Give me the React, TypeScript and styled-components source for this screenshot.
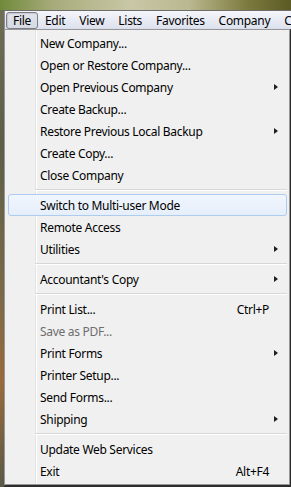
import styled, { createGlobalStyle } from "styled-components";

const GlobalStyle = createGlobalStyle`
  html, body {
    margin: 0;
    padding: 0;
    background: #4a4a3a;
  }
  * {
    box-sizing: border-box;
  }
`;

const Screen = styled.div`
  width: 291px;
  height: 487px;
  overflow: hidden;
  font-family: "Noto Sans", "Open Sans", sans-serif;
  font-size: 12px;
  letter-spacing: -0.3px;
  color: #000;
  background: linear-gradient(
    180deg,
    #6e6f55 0%,
    #5e5e48 30%,
    #7a6a4a 60%,
    #9a6a3a 78%,
    #5a5a4a 100%
  );
`;

const TitleStrip = styled.div`
  height: 10px;
  background: linear-gradient(
    90deg,
    #6f8a3a 0%,
    #a7ab7a 18%,
    #c9c7a6 45%,
    #b9b88f 65%,
    #7d7a3e 85%,
    #5c5a25 100%
  );
`;

const Window = styled.div`
  margin-left: 4px;
  border-top: 1px solid #6d6d6d;
  background: #3c3c3c;
  height: 477px;
`;

const MenuBar = styled.div`
  display: flex;
  align-items: center;
  height: 18px;
  padding-left: 1px;
  border-left: 1px solid #8c8c8c;
  background: linear-gradient(180deg, #f5f6fb 0%, #e6e9f3 60%, #dde2ee 100%);
  white-space: nowrap;
`;

const BarItem = styled.div<{ $open?: boolean }>`
  height: 17px;
  line-height: 15px;
  padding: 0 6px;
  border: 1px solid ${(p) => (p.$open ? "#7c7e86" : "transparent")};
  border-radius: 3px;
  background: ${(p) =>
    p.$open ? "linear-gradient(180deg, #e1e4ec 0%, #d6dae4 100%)" : "transparent"};
  box-shadow: ${(p) => (p.$open ? "inset 1px 1px 1px rgba(0,0,0,0.12)" : "none")};
`;

const Dropdown = styled.div`
  width: 286px;
  border: 1px solid #979797;
  padding: 2px 2px 2px 3px;
  background:
    linear-gradient(
      90deg,
      transparent 30px,
      #e2e3e3 30px,
      #e2e3e3 31px,
      #ffffff 31px,
      #ffffff 32px,
      transparent 32px
    ),
    #f0f0f0;
  box-shadow: 2px 2px 3px rgba(0, 0, 0, 0.35);
`;

const Item = styled.div<{ $hot?: boolean; $disabled?: boolean }>`
  display: flex;
  align-items: center;
  height: 22px;
  padding-left: 31px;
  border: 1px solid ${(p) => (p.$hot ? "#aecbf0" : "transparent")};
  border-radius: 3px;
  background: ${(p) =>
    p.$hot ? "linear-gradient(180deg, #f1f6fd 0%, #e5eefa 100%)" : "transparent"};
  color: ${(p) => (p.$disabled ? "#6d6d6d" : "#000")};
  white-space: nowrap;
`;

const Shortcut = styled.span`
  margin-left: auto;
  padding-right: 17px;
`;

const Arrow = styled.span`
  margin-left: auto;
  margin-right: 8px;
  width: 0;
  height: 0;
  border-top: 3.5px solid transparent;
  border-bottom: 3.5px solid transparent;
  border-left: 4px solid #1e1e1e;
`;

const Separator = styled.div`
  height: 8px;
  margin-left: 27px;
  display: flex;
  flex-direction: column;
  justify-content: center;
  &::before {
    content: "";
    height: 1px;
    background: #d7d7d7;
  }
  &::after {
    content: "";
    height: 1px;
    background: #ffffff;
  }
`;

type Entry =
  | { sep: true }
  | {
      sep?: false;
      label: string;
      sub?: boolean;
      key?: string;
      hot?: boolean;
      disabled?: boolean;
    };

const entries: Entry[] = [
  { label: "New Company..." },
  { label: "Open or Restore Company..." },
  { label: "Open Previous Company", sub: true },
  { label: "Create Backup..." },
  { label: "Restore Previous Local Backup", sub: true },
  { label: "Create Copy..." },
  { label: "Close Company" },
  { sep: true },
  { label: "Switch to Multi-user Mode", hot: true },
  { label: "Remote Access" },
  { label: "Utilities", sub: true },
  { sep: true },
  { label: "Accountant's Copy", sub: true },
  { sep: true },
  { label: "Print List...", key: "Ctrl+P" },
  { label: "Save as PDF...", disabled: true },
  { label: "Print Forms", sub: true },
  { label: "Printer Setup..." },
  { label: "Send Forms..." },
  { label: "Shipping", sub: true },
  { sep: true },
  { label: "Update Web Services" },
  { label: "Exit", key: "Alt+F4" },
];

const menus = ["File", "Edit", "View", "Lists", "Favorites", "Company", "Customers"];

export default function App() {
  return (
    <>
      <GlobalStyle />
      <Screen>
        <TitleStrip />
        <Window>
          <MenuBar>
            {menus.map((m, i) => (
              <BarItem key={m} $open={i === 0}>
                {m}
              </BarItem>
            ))}
          </MenuBar>
          <Dropdown>
            {entries.map((e, i) =>
              e.sep ? (
                <Separator key={i} />
              ) : (
                <Item key={i} $hot={e.hot} $disabled={e.disabled}>
                  {e.label}
                  {e.key && <Shortcut>{e.key}</Shortcut>}
                  {e.sub && <Arrow />}
                </Item>
              )
            )}
          </Dropdown>
        </Window>
      </Screen>
    </>
  );
}
